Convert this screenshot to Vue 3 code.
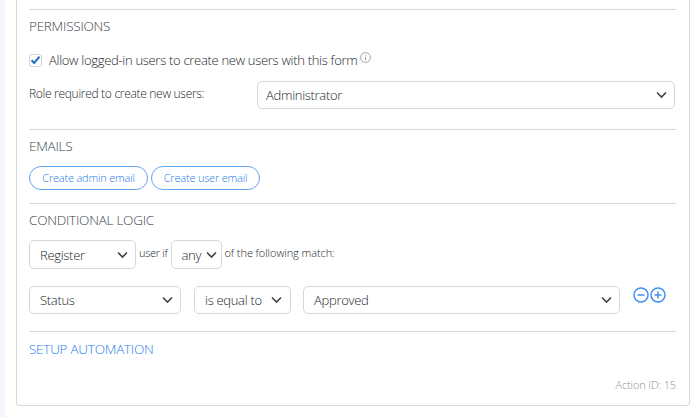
<script setup>
const chevron = 'M1 1.5 L5.5 6 L10 1.5'
</script>

<template>
  <div class="page">
    <div class="content">
      <div class="card">
        <section class="sec perm">
          <h3 class="heading">PERMISSIONS</h3>
          <label class="check-row">
            <span class="box">
              <svg width="11" height="10" viewBox="0 0 11 10"><path d="M1.5 5.2 L4.2 8 L9.5 1.6" fill="none" stroke="#1f6fc4" stroke-width="2"/></svg>
            </span>
            <span class="check-text">Allow logged-in users to create new users with this form</span>
            <svg class="info" width="11" height="11" viewBox="0 0 11 11">
              <circle cx="5.5" cy="5.5" r="4.9" fill="none" stroke="#8a8f94" stroke-width="0.8"/>
              <path d="M5.5 4.8 V8.2 M5.5 2.6 V3.6" stroke="#8a8f94" stroke-width="0.9"/>
            </svg>
          </label>
          <div class="role-row">
            <span class="role-label">Role required to create new users:</span>
            <div class="select role-select">
              <span>Administrator</span>
              <svg width="11" height="8" viewBox="0 0 11 8"><path :d="chevron" fill="none" stroke="#3c434a" stroke-width="1.6"/></svg>
            </div>
          </div>
        </section>

        <section class="sec emails">
          <h3 class="heading">EMAILS</h3>
          <div class="btns">
            <button class="pill">Create admin email</button>
            <button class="pill">Create user email</button>
          </div>
        </section>

        <section class="sec logic">
          <h3 class="heading">CONDITIONAL LOGIC</h3>
          <div class="logic-row">
            <div class="select tall w-register">
              <span>Register</span>
              <svg width="11" height="8" viewBox="0 0 11 8"><path :d="chevron" fill="none" stroke="#3c434a" stroke-width="1.6"/></svg>
            </div>
            <span class="small-text">user if</span>
            <div class="select tall w-any">
              <span>any</span>
              <svg width="11" height="8" viewBox="0 0 11 8"><path :d="chevron" fill="none" stroke="#3c434a" stroke-width="1.6"/></svg>
            </div>
            <span class="small-text follow">of the following match:</span>
          </div>
          <div class="cond-row">
            <div class="select w-status">
              <span>Status</span>
              <svg width="11" height="8" viewBox="0 0 11 8"><path :d="chevron" fill="none" stroke="#3c434a" stroke-width="1.6"/></svg>
            </div>
            <div class="select w-equal">
              <span>is equal to</span>
              <svg width="11" height="8" viewBox="0 0 11 8"><path :d="chevron" fill="none" stroke="#3c434a" stroke-width="1.6"/></svg>
            </div>
            <div class="select w-approved">
              <span>Approved</span>
              <svg width="11" height="8" viewBox="0 0 11 8"><path :d="chevron" fill="none" stroke="#3c434a" stroke-width="1.6"/></svg>
            </div>
            <div class="icons">
              <svg width="16" height="16" viewBox="0 0 16 16">
                <circle cx="8" cy="8" r="7" fill="none" stroke="#3f8ff0" stroke-width="1.5"/>
                <path d="M4.5 8 H11.5" stroke="#3f8ff0" stroke-width="1.5"/>
              </svg>
              <svg width="16" height="16" viewBox="0 0 16 16">
                <circle cx="8" cy="8" r="7" fill="none" stroke="#3f8ff0" stroke-width="1.5"/>
                <path d="M4.5 8 H11.5 M8 4.5 V11.5" stroke="#3f8ff0" stroke-width="1.5"/>
              </svg>
            </div>
          </div>
        </section>

        <section class="sec auto">
          <h3 class="heading link">SETUP AUTOMATION</h3>
        </section>

        <div class="action-id">Action ID: 15</div>
      </div>
    </div>
  </div>
</template>

<style>
html, body { margin: 0; background: #ffffff; }
</style>

<style scoped>
.page {
  width: 700px;
  height: 417px;
  overflow: hidden;
  background: #f5f6fb;
  padding-left: 5px;
  box-sizing: border-box;
  font-family: "Open Sans", "Noto Sans", sans-serif;
  font-weight: 300;
  letter-spacing: -0.3px;
  color: #23282d;
}
.content {
  background: #fff;
  height: 417px;
  padding-left: 11px;
  box-sizing: content-box;
}
.card {
  width: 674px;
  height: 406px;
  box-sizing: border-box;
  border: 1px solid #d6d6d6;
  border-top: none;
  border-radius: 0 0 4px 4px;
  padding: 9px 13px 0 12px;
  display: flex;
  flex-direction: column;
}
.sec { border-top: 1px solid #d8d8d8; }
.perm { height: 119px; }
.emails { height: 73px; }
.logic { height: 127px; }
.auto { height: 43px; }
.heading {
  margin: 0;
  font-size: 13.5px;
  font-weight: 300;
  letter-spacing: -0.25px;
  line-height: 18px;
  color: #3c434a;
}
.perm .heading { padding-top: 7px; }
.emails .heading { padding-top: 7px; }
.logic .heading { padding-top: 7px; }
.auto .heading { padding-top: 8px; }
.heading.link { color: #1f7deb; }
.check-row {
  display: flex;
  align-items: center;
  margin-top: 17px;
  height: 16px;
}
.box {
  width: 13px;
  height: 13px;
  border: 1px solid #d0d3d8;
  border-radius: 3px;
  box-sizing: border-box;
  display: flex;
  align-items: center;
  justify-content: center;
  flex: none;
}
.check-text {
  font-size: 13px;
  margin-left: 7px;
  white-space: nowrap;
}
.info { margin: -6px 0 0 3px; flex: none; }
.role-row {
  display: flex;
  align-items: flex-start;
  margin-top: 13px;
}
.role-label {
  width: 228px;
  font-size: 12px;
  line-height: 25px;
  white-space: nowrap;
  flex: none;
}
.select {
  box-sizing: border-box;
  height: 28px;
  border: 1px solid #d5d7da;
  border-radius: 5px;
  padding: 0 7px 0 10px;
  display: flex;
  align-items: center;
  justify-content: space-between;
  font-size: 13px;
  white-space: nowrap;
  background: #fff;
}
.role-select { width: 418px; padding-left: 8px; }
.tall { height: 29px; }
.w-register { width: 107px; }
.w-any { width: 51px; padding-right: 4px; }
.w-status { width: 152px; }
.w-equal { width: 97px; padding-right: 8px; }
.w-approved { width: 317px; }
.btns {
  display: flex;
  gap: 3px;
  margin-top: 11px;
}
.pill {
  height: 24px;
  padding: 0 0 1px;
  border: 1px solid #62a5f2;
  border-radius: 12px;
  background: #fff;
  color: #1f7deb;
  font: inherit;
  font-size: 11px;
  letter-spacing: -0.2px;
  width: 119px;
}
.pill + .pill { width: 109px; }
.logic-row {
  display: flex;
  align-items: flex-start;
  margin-top: 11px;
}
.small-text {
  font-size: 11px;
  line-height: 26px;
  margin: 0 3px;
  white-space: nowrap;
}
.follow { letter-spacing: -0.08px; }
.cond-row {
  display: flex;
  align-items: flex-start;
  margin-top: 17px;
}
.w-status { margin-right: 13px; }
.w-equal { margin-right: 12px; }
.icons {
  display: flex;
  gap: 1px;
  margin: 1px 0 0 13px;
}
.action-id {
  text-align: right;
  font-size: 11px;
  letter-spacing: -0.15px;
  line-height: 14px;
  color: #8e9297;
  margin-top: 3px;
}
</style>
